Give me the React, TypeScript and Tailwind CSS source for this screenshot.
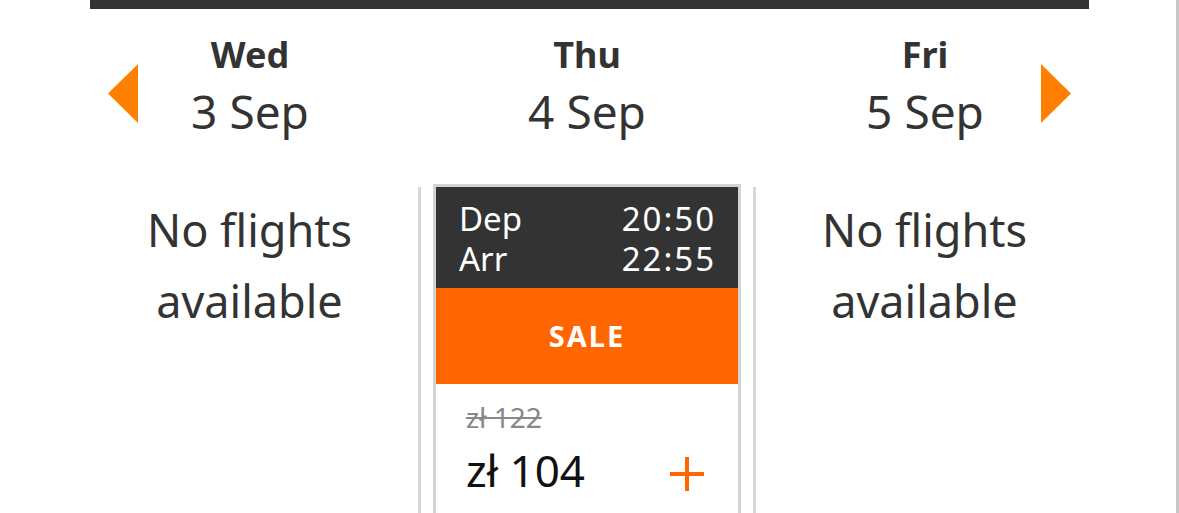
import React from "react";

const font = { fontFamily: '"Noto Sans", "Open Sans", sans-serif' };

function ArrowLeft() {
  return (
    <svg width="30" height="59" viewBox="0 0 30 59" className="block">
      <polygon points="30,0 30,59 0,29.5" fill="#ff8000" />
    </svg>
  );
}

function ArrowRight() {
  return (
    <svg width="30" height="59" viewBox="0 0 30 59" className="block">
      <polygon points="0,0 0,59 30,29.5" fill="#ff8000" />
    </svg>
  );
}

function DayHead({ day, date, width }: { day: string; date: string; width: string }) {
  return (
    <div className={`${width} text-center text-[#333]`}>
      <div className="text-[36px] leading-[40px] font-bold">{day}</div>
      <div className="mt-[10px] text-[46px] leading-[52px]">{date}</div>
    </div>
  );
}

function NoFlights() {
  return (
    <div className="w-[337px] pt-[10px] text-center text-[45px] leading-[71px] text-[#333]">
      <div>No flights</div>
      <div>available</div>
    </div>
  );
}

function Divider() {
  return <div className="w-[3px] mt-[3px] self-stretch bg-[#d6d6d6]" />;
}

export default function App() {
  return (
    <div className="flex h-[513px] w-[1179px] overflow-hidden bg-white" style={font}>
      <div className="w-[1176px]">
        <div className="ml-[90px] h-[9px] w-[999px] bg-[#333]" />

        <div className="mt-[26px] ml-[108px] flex items-start">
          <div className="mt-[29px]">
            <ArrowLeft />
          </div>
          <DayHead day="Wed" date="3 Sep" width="w-[224px]" />
          <DayHead day="Thu" date="4 Sep" width="w-[450px]" />
          <DayHead day="Fri" date="5 Sep" width="w-[226px]" />
          <div className="mt-[29px] ml-[3px]">
            <ArrowRight />
          </div>
        </div>

        <div className="mt-[47px] ml-[81px] flex items-start h-[400px]">
          <NoFlights />
          <Divider />
          <div className="w-[332px] px-[12px]">
            <div className="border-[3px] border-[#d4d4d4] bg-white">
              <div className="bg-[#333] pt-[12px] pb-[9px] pl-[23px] pr-[24px] text-white text-[33px] leading-[40px]">
                <div className="flex justify-between">
                  <span>Dep</span>
                  <span className="tracking-[0.06em] -mr-[2px]">20:50</span>
                </div>
                <div className="flex justify-between">
                  <span>Arr</span>
                  <span className="tracking-[0.06em] -mr-[2px]">22:55</span>
                </div>
              </div>
              <div className="h-[96px] bg-[#ff6600] flex items-center justify-center text-white font-bold text-[29px] tracking-[0.07em]">
                SALE
              </div>
              <div className="pt-[16px] pl-[30px] pr-[34px] pb-[40px]">
                <div className="text-[28px] leading-[34px] text-[#888] line-through">zł 122</div>
                <div className="mt-[10px] flex items-start justify-between">
                  <span className="text-[44px] leading-[52px] text-[#111]">zł 104</span>
                  <svg width="34" height="34" viewBox="0 0 34 34" className="mt-[13px] block">
                    <rect x="15" y="0" width="4" height="34" fill="#ff6600" />
                    <rect x="0" y="15" width="34" height="4" fill="#ff6600" />
                  </svg>
                </div>
              </div>
            </div>
          </div>
          <Divider />
          <NoFlights />
        </div>
      </div>
      <div className="w-[3px] bg-[#c8c8c8]" />
    </div>
  );
}
